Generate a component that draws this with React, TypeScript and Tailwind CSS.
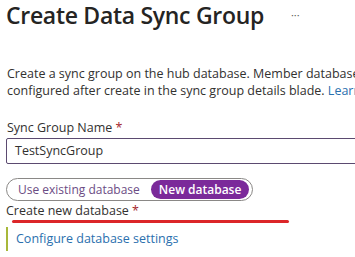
export default function App() {
  return (
    <div
      className="w-[355px] h-[257px] overflow-hidden bg-white text-[#323130]"
      style={{ fontFamily: '"Open Sans", "Noto Sans", sans-serif' }}
    >
      {/* Header */}
      <div className="flex items-center pl-[6px] pt-[1px] h-[30px]">
        <h1 className="text-[23px] font-semibold leading-none tracking-[-0.3px] whitespace-nowrap text-[#252423]">
          Create Data Sync Group
        </h1>
        <span className="ml-[27px] text-[11px] text-[#605e5c] leading-none mb-[2px]">···</span>
      </div>

      {/* Description */}
      <div className="mt-[35px] pl-[7px] text-[12.5px] leading-[17px] whitespace-nowrap">
        <p>Create a sync group on the hub database. Member databases are</p>
        <p>
          configured after create in the sync group details blade.{' '}
          <span className="text-[#2a6fae]">Learn more</span>
        </p>
      </div>

      {/* Sync group name */}
      <div className="mt-[20px] pl-[7px] text-[12.5px] leading-[17px]">
        Sync Group Name <span className="text-[#a4262c]">*</span>
      </div>
      <div className="mt-[2px] ml-[6px] w-[360px] h-[26px] border border-[#5b4a70] rounded-[2px] flex items-center pl-[8px] text-[12.5px]">
        TestSyncGroup
      </div>

      {/* Toggle */}
      <div className="mt-[14px] ml-[6px] inline-flex items-center h-[23px] border border-[#8a8886] rounded-full pl-[11px] pr-[3px] text-[12px]">
        <span className="text-[#6b4c84] pr-[11px]">Use existing database</span>
        <span className="h-[19px] flex items-center bg-[#7b2a9a] text-white rounded-full px-[8px] font-semibold">
          New database
        </span>
      </div>

      {/* Create new database */}
      <div className="pl-[6px] text-[12.5px] leading-[17px] mt-[1px]">
        Create new database <span className="text-[#a4262c]">*</span>
      </div>
      <div className="ml-[12px] w-[277px] h-[3px] rounded-full bg-[#dc2629] mt-[1px]" />
      <div className="ml-[6px] mt-[4px] border-l-2 border-[#a8b83a] h-[24px] flex items-center pl-[8px]">
        <span className="text-[12.5px] text-[#2a6fae]">Configure database settings</span>
      </div>
    </div>
  );
}
